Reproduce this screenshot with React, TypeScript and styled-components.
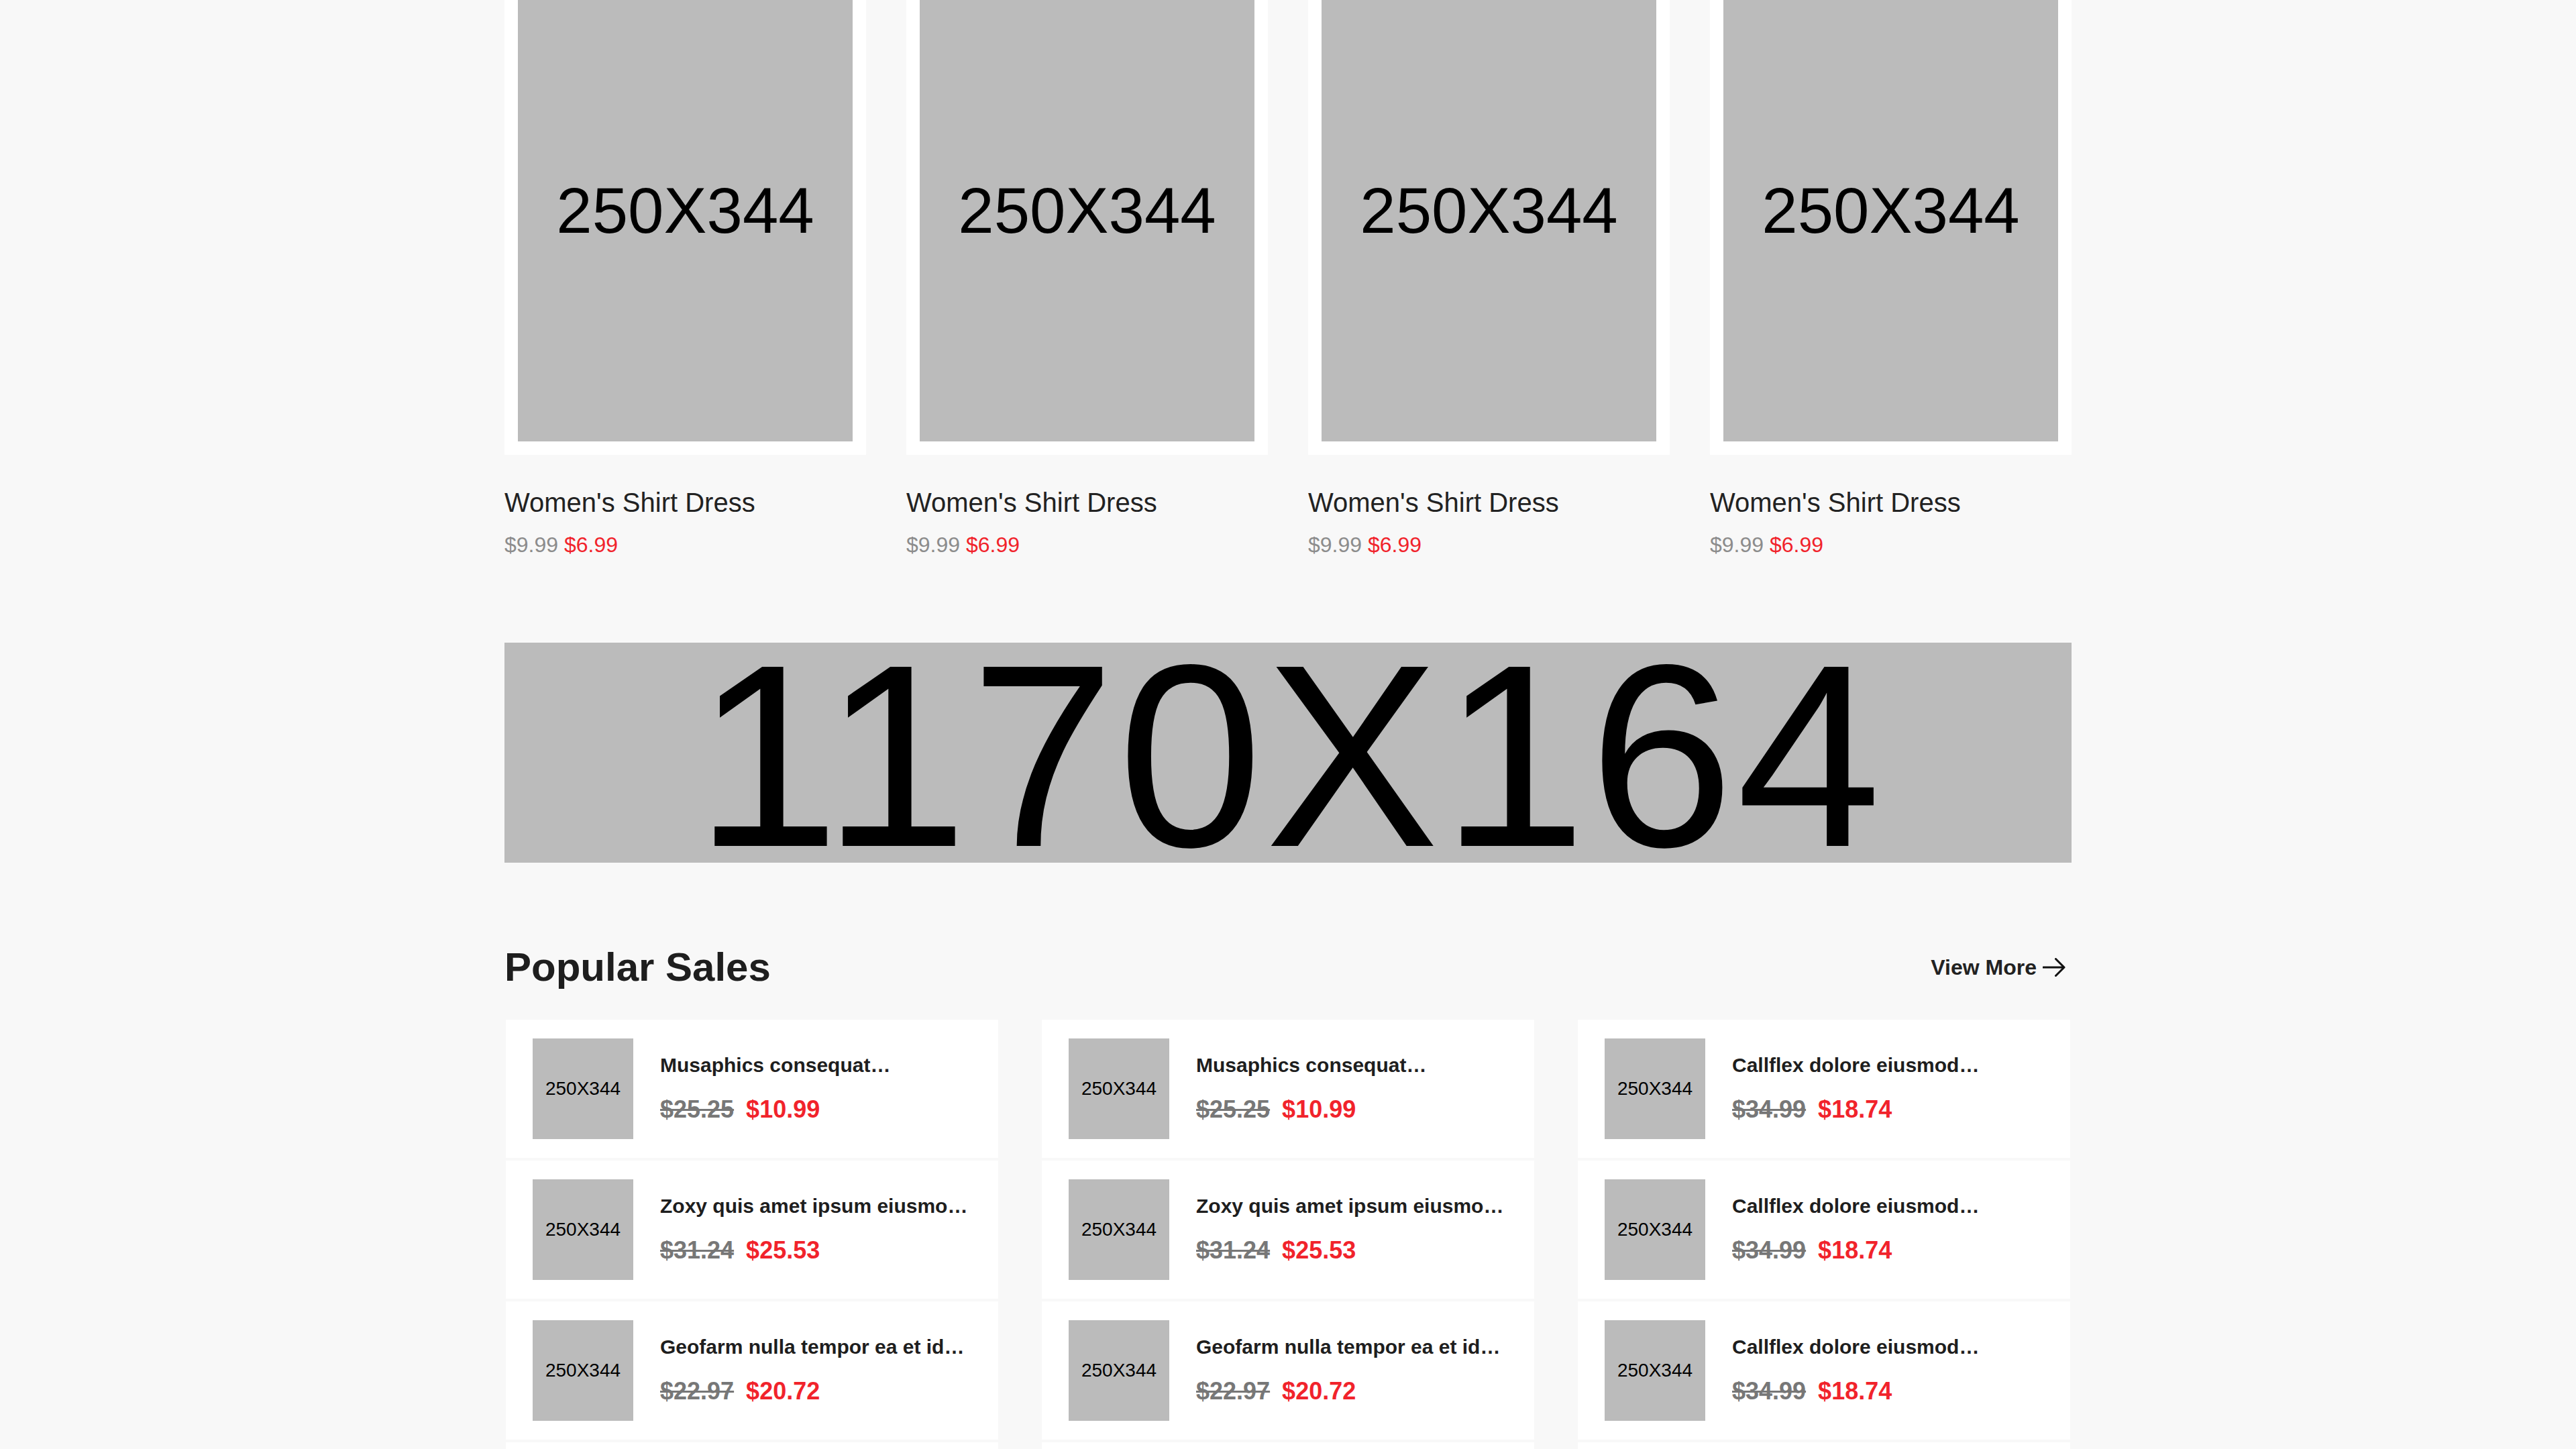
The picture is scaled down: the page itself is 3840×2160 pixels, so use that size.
import React from 'react';
import styled, { createGlobalStyle } from 'styled-components';

const GlobalStyle = createGlobalStyle`
  html, body {
    margin: 0;
    padding: 0;
    background: #f8f8f8;
  }
  body {
    font-family: "Liberation Sans", Arial, Helvetica, sans-serif;
    color: #222;
  }
  *, *::before, *::after {
    box-sizing: border-box;
  }
`;

const Container = styled.main`
  width: 2336px;
  margin: 0 auto;
  display: flex;
  flex-direction: column;
`;

const ProductGrid = styled.section`
  display: grid;
  grid-template-columns: repeat(4, 539px);
  column-gap: 60px;
  margin-top: -50px;
`;

const ProductCard = styled.article`
  display: flex;
  flex-direction: column;
`;

const ImageFrame = styled.div`
  background: #fff;
  padding: 20px;
`;

const Placeholder = styled.div<{ $w: number; $h: number; $size: number }>`
  width: ${(p) => p.$w}px;
  height: ${(p) => p.$h}px;
  flex: none;
  background: #bbbbbb;
  color: #000;
  display: flex;
  align-items: center;
  justify-content: center;
  font-family: "Liberation Sans", Arial, sans-serif;
  font-size: ${(p) => p.$size}px;
  line-height: 1;
  white-space: nowrap;
`;

const ProductTitle = styled.h3`
  margin: 47px 0 0;
  font-size: 40px;
  line-height: 48px;
  font-weight: 400;
  color: #222;
`;

const ProductPrice = styled.div`
  margin-top: 15px;
  font-size: 32px;
  line-height: 48px;
`;

const OldPrice = styled.span`
  color: #8c8c8c;
`;

const NewPrice = styled.span`
  color: #f1232b;
`;

const Banner = styled.div`
  margin-top: 122px;
  height: 328px;
  background: #bbbbbb;
  display: flex;
  align-items: center;
  justify-content: center;
  padding-top: 9px;
  padding-left: 4px;
  font-size: 388px;
  line-height: 1;
  letter-spacing: 4px;
  color: #000;
  white-space: nowrap;
`;

const SectionHeader = styled.div`
  margin-top: 120px;
  display: flex;
  align-items: center;
  justify-content: space-between;
`;

const SectionTitle = styled.h2`
  margin: 0;
  font-size: 60px;
  line-height: 72px;
  font-weight: 700;
  color: #1e1e1e;
`;

const ViewMore = styled.a`
  display: flex;
  align-items: center;
  gap: 9px;
  margin-right: 9px;
  font-size: 32px;
  line-height: 40px;
  font-weight: 700;
  color: #222;
  text-decoration: none;
`;

const SalesGrid = styled.section`
  margin-top: 42px;
  padding: 0 2px;
  display: grid;
  grid-template-columns: repeat(3, 734px);
  column-gap: 65px;
`;

const SalesColumn = styled.div`
  display: flex;
  flex-direction: column;
  gap: 4px;
`;

const SaleItem = styled.div`
  height: 206px;
  background: #fff;
  padding: 28px 40px;
  display: flex;
  align-items: center;
  gap: 40px;
`;

const SaleInfo = styled.div`
  display: flex;
  flex-direction: column;
  min-width: 0;
`;

const SaleTitle = styled.div`
  font-size: 30px;
  line-height: 36px;
  font-weight: 700;
  color: #1e1e1e;
  white-space: nowrap;
`;

const SalePrice = styled.div`
  margin-top: 26px;
  font-size: 36px;
  line-height: 44px;
  font-weight: 700;
  white-space: nowrap;
`;

const SaleOld = styled.span`
  color: #777;
  text-decoration: line-through;
  margin-right: 18px;
`;

const SaleNew = styled.span`
  color: #f1232b;
`;

const ArrowIcon = () => (
  <svg width="34" height="28" viewBox="0 0 34 28" fill="none" aria-hidden="true">
    <path
      d="M1 14H32M19.5 1.5L32 14L19.5 26.5"
      stroke="#111"
      strokeWidth="3"
      strokeLinecap="round"
      strokeLinejoin="round"
    />
  </svg>
);

type Sale = { title: string; old: string; price: string };

const col1: Sale[] = [
  { title: 'Musaphics consequat…', old: '$25.25', price: '$10.99' },
  { title: 'Zoxy quis amet ipsum eiusmo…', old: '$31.24', price: '$25.53' },
  { title: 'Geofarm nulla tempor ea et id…', old: '$22.97', price: '$20.72' },
  { title: 'Musaphics consequat…', old: '$25.25', price: '$10.99' },
];

const col3: Sale[] = [
  { title: 'Callflex dolore eiusmod…', old: '$34.99', price: '$18.74' },
  { title: 'Callflex dolore eiusmod…', old: '$34.99', price: '$18.74' },
  { title: 'Callflex dolore eiusmod…', old: '$34.99', price: '$18.74' },
  { title: 'Callflex dolore eiusmod…', old: '$34.99', price: '$18.74' },
];

const columns: Sale[][] = [col1, col1, col3];

export default function App() {
  return (
    <>
      <GlobalStyle />
      <Container>
        <ProductGrid>
          {[0, 1, 2, 3].map((i) => (
            <ProductCard key={i}>
              <ImageFrame>
                <Placeholder $w={499} $h={688} $size={96}>
                  250X344
                </Placeholder>
              </ImageFrame>
              <ProductTitle>Women's Shirt Dress</ProductTitle>
              <ProductPrice>
                <OldPrice>$9.99</OldPrice> <NewPrice>$6.99</NewPrice>
              </ProductPrice>
            </ProductCard>
          ))}
        </ProductGrid>

        <Banner>1170X164</Banner>

        <SectionHeader>
          <SectionTitle>Popular Sales</SectionTitle>
          <ViewMore href="#">
            View More
            <ArrowIcon />
          </ViewMore>
        </SectionHeader>

        <SalesGrid>
          {columns.map((col, ci) => (
            <SalesColumn key={ci}>
              {col.map((s, si) => (
                <SaleItem key={si}>
                  <Placeholder $w={150} $h={150} $size={28}>
                    250X344
                  </Placeholder>
                  <SaleInfo>
                    <SaleTitle>{s.title}</SaleTitle>
                    <SalePrice>
                      <SaleOld>{s.old}</SaleOld>
                      <SaleNew>{s.price}</SaleNew>
                    </SalePrice>
                  </SaleInfo>
                </SaleItem>
              ))}
            </SalesColumn>
          ))}
        </SalesGrid>
      </Container>
    </>
  );
}
